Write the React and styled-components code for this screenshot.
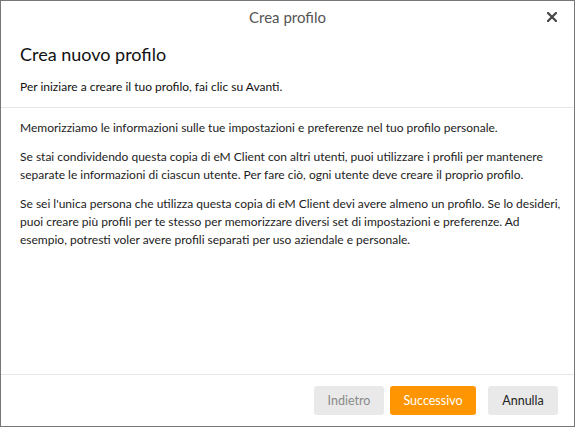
import styled, { createGlobalStyle } from "styled-components";

const GlobalStyle = createGlobalStyle`
  html, body {
    margin: 0;
    padding: 0;
    background: #fff;
  }
  body {
    font-family: Lato, "Open Sans", sans-serif;
  }
`;

const Window = styled.div`
  box-sizing: border-box;
  width: 575px;
  height: 427px;
  border: 1px solid #777;
  background: #fff;
  display: flex;
  flex-direction: column;
`;

// barra del titolo
const TitleBar = styled.div`
  position: relative;
  height: 32px;
  display: flex;
  align-items: center;
  justify-content: center;
  font-size: 15px;
  color: #555;
`;

const CloseButton = styled.button`
  position: absolute;
  right: 16px;
  top: 10px;
  width: 12px;
  height: 12px;
  padding: 0;
  border: none;
  background: none;
  display: flex;
  align-items: center;
  justify-content: center;
  cursor: pointer;
`;

// intestazione
const Header = styled.div`
  padding: 9px 19px 0;
  height: 75px;
  box-sizing: border-box;
  border-bottom: 1px solid #e6e6e6;
`;

const Heading = styled.h1`
  margin: 0;
  font-size: 18px;
  font-weight: 400;
  color: #111;
  line-height: 24px;
`;

const Intro = styled.p`
  margin: 13px 0 0;
  font-size: 12px;
  color: #111;
  line-height: 16px;
`;

// testo principale
const Body = styled.div`
  flex: 1;
  padding: 11px 8px 10px 19px;
  border-bottom: 1px solid #e6e6e6;
`;

const Paragraph = styled.p`
  margin: 0 0 11px;
  font-size: 12px;
  line-height: 18px;
  color: #1c1c1c;
`;

// pulsanti
const Footer = styled.div`
  height: 51px;
  display: flex;
  align-items: center;
  justify-content: flex-end;
  padding-right: 16px;
`;

const Button = styled.button`
  height: 29px;
  min-width: ${(props) => props.$width}px;
  margin-left: ${(props) => props.$gap}px;
  border: none;
  border-radius: 3px;
  font-family: inherit;
  font-size: 12.5px;
  padding: 0 12px;
  background: ${(props) => (props.$primary ? "#ff9500" : "#e9e9e9")};
  color: ${(props) =>
    props.$primary ? "#fff" : props.disabled ? "#8a8a8a" : "#222"};
  cursor: ${(props) => (props.disabled ? "default" : "pointer")};
`;

export default function App() {
  return (
    <>
      <GlobalStyle />
      <Window>
        <TitleBar>
          Crea profilo
          <CloseButton aria-label="Chiudi">
            <svg width="10" height="10" viewBox="0 0 10 10">
              <path
                d="M1 1 L9 9 M9 1 L1 9"
                stroke="#444"
                strokeWidth="2.2"
                strokeLinecap="square"
              />
            </svg>
          </CloseButton>
        </TitleBar>
        <Header>
          <Heading>Crea nuovo profilo</Heading>
          <Intro>Per iniziare a creare il tuo profilo, fai clic su Avanti.</Intro>
        </Header>
        <Body>
          <Paragraph>
            Memorizziamo le informazioni sulle tue impostazioni e preferenze nel
            tuo profilo personale.
          </Paragraph>
          <Paragraph>
            Se stai condividendo questa copia di eM Client con altri utenti, puoi
            utilizzare i profili per mantenere separate le informazioni di
            ciascun utente. Per fare ciò, ogni utente deve creare il proprio
            profilo.
          </Paragraph>
          <Paragraph>
            Se sei l'unica persona che utilizza questa copia di eM Client devi
            avere almeno un profilo. Se lo desideri, puoi creare più profili per
            te stesso per memorizzare diversi set di impostazioni e preferenze.
            Ad esempio, potresti voler avere profili separati per uso aziendale
            e personale.
          </Paragraph>
        </Body>
        <Footer>
          <Button disabled $width={70} $gap={0}>
            Indietro
          </Button>
          <Button $primary $width={86} $gap={6}>
            Successivo
          </Button>
          <Button $width={70} $gap={12}>
            Annulla
          </Button>
        </Footer>
      </Window>
    </>
  );
}
